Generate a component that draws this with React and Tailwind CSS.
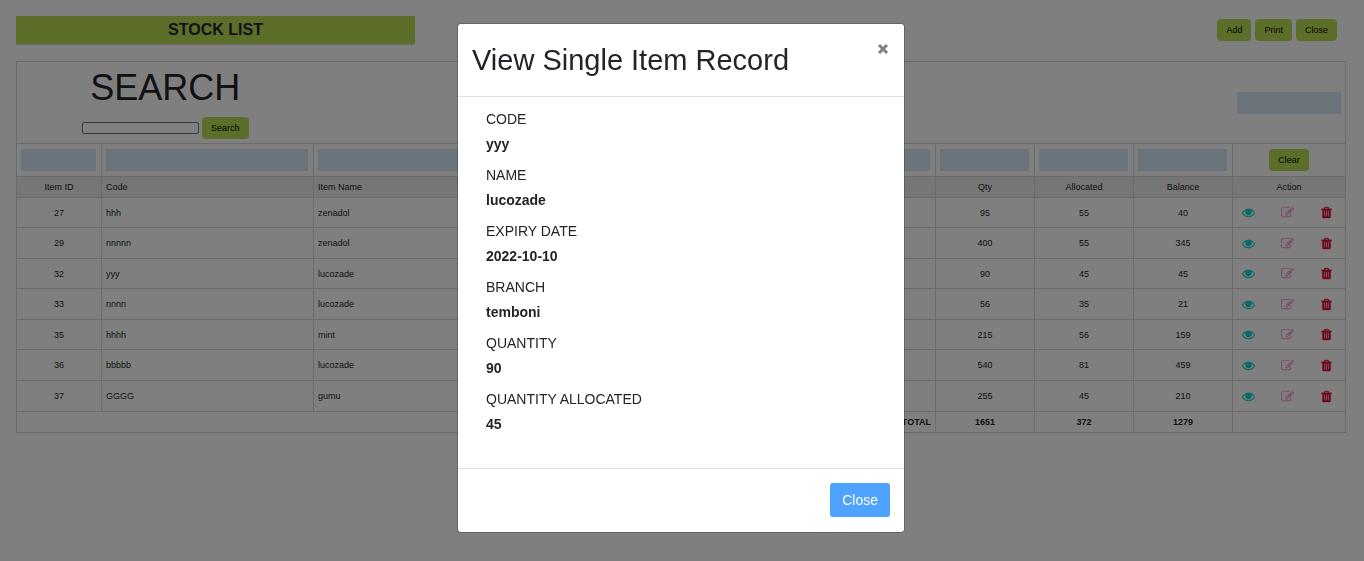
import React from "react";

const ITEMS = [
  { id: 27, code: "hhh", name: "zenadol", qty: 95, allocated: 55, balance: 40 },
  { id: 29, code: "nnnnn", name: "zenadol", qty: 400, allocated: 55, balance: 345 },
  { id: 32, code: "yyy", name: "lucozade", qty: 90, allocated: 45, balance: 45 },
  { id: 33, code: "nnnn", name: "lucozade", qty: 56, allocated: 35, balance: 21 },
  { id: 35, code: "hhhh", name: "mint", qty: 215, allocated: 56, balance: 159 },
  { id: 36, code: "bbbbb", name: "lucozade", qty: 540, allocated: 81, balance: 459 },
  { id: 37, code: "GGGG", name: "gumu", qty: 255, allocated: 45, balance: 210 },
];

const DETAILS = [
  ["CODE", "yyy"],
  ["NAME", "lucozade"],
  ["EXPIRY DATE", "2022-10-10"],
  ["BRANCH", "temboni"],
  ["QUANTITY", "90"],
  ["QUANTITY ALLOCATED", "45"],
];

const EYE =
  "M1664 960q-152-236-381-353 61 104 61 225 0 185-131.5 316.5t-316.5 131.5-316.5-131.5-131.5-316.5q0-121 61-225-229 117-381 353 133 205 333.5 326.5t434.5 121.5 434.5-121.5 333.5-326.5zm-720-384q0-20-14-34t-34-14q-125 0-214.5 89.5t-89.5 214.5q0 20 14 34t34 14 34-14 14-34q0-86 61-147t147-61q20 0 34-14t14-34zm848 384q0 34-20 69-140 230-376.5 368.5t-499.5 138.5-499.5-139-376.5-368q-20-35-20-69t20-69q140-229 376.5-368t499.5-139 499.5 139 376.5 368q20 35 20 69z";
const PUPIL = "M596 850a300 300 0 1 0 600 0a300 300 0 1 0 -600 0z";
const EDIT =
  "M888 1184l116-116-152-152-116 116v56h96v96h56zm440-720q-16-16-33 1l-350 350q-17 17-1 33t33-1l350-350q17-17 1-33zm80 594v190q0 119-84.5 203.5t-203.5 84.5h-832q-119 0-203.5-84.5t-84.5-203.5v-832q0-119 84.5-203.5t203.5-84.5h832q63 0 117 25 15 7 18 23 3 17-9 29l-49 49q-14 14-32 8-23-6-45-6h-832q-66 0-113 47t-47 113v832q0 66 47 113t113 47h832q66 0 113-47t47-113v-126q0-13 9-22l64-64q15-15 35-7t20 29zm-96-738l288 288-672 672h-288v-288zm444 132l-92 92-288-288 92-92q28-28 68-28t68 28l152 152q28 28 28 68t-28 68z";
const TRASH =
  "M704 1376v-704q0-14-9-23t-23-9h-64q-14 0-23 9t-9 23v704q0 14 9 23t23 9h64q14 0 23-9t9-23zm256 0v-704q0-14-9-23t-23-9h-64q-14 0-23 9t-9 23v704q0 14 9 23t23 9h64q14 0 23-9t9-23zm256 0v-704q0-14-9-23t-23-9h-64q-14 0-23 9t-9 23v704q0 14 9 23t23 9h64q14 0 23-9t9-23zm-544-992h448l-48-117q-7-9-17-11h-317q-10 2-17 11zm928 32v64q0 14-9 23t-23 9h-96v948q0 83-47 143.5t-113 60.5h-832q-66 0-113-58.5t-47-141.5v-952h-96q-14 0-23-9t-9-23v-64q0-14 9-23t23-9h309l70-167q15-37 54-63t79-26h320q40 0 79 26t54 63l70 167h309q14 0 23 9t9 23z";

function IconButton({ label, paths, weight, tone }) {
  return (
    <button type="button" aria-label={label} className={`block ${tone}`}>
      <svg
        viewBox="0 0 1792 1792"
        fill="currentColor"
        stroke="currentColor"
        strokeWidth={weight}
        className="block size-[13px] overflow-visible"
        aria-hidden="true"
      >
        {paths.map((d) => (
          <path key={d} d={d} />
        ))}
      </svg>
    </button>
  );
}

function GreenButton({ children }) {
  return (
    <button type="button" className="h-[22px] rounded-[4px] bg-[#badd57] px-[9px] text-[9px] leading-3 text-black">
      {children}
    </button>
  );
}

function FilterInput({ label }) {
  return <input type="text" aria-label={label} className="block h-[22px] w-full bg-[#d7e7f7] px-1 text-[9px]" />;
}

const cell = "border border-[#d6d6d6] px-1";
const centered = `${cell} text-center`;

function StockTable() {
  return (
    <table className="w-full table-fixed border-collapse text-[9px] leading-3">
      <colgroup>
        <col className="w-[85px]" />
        <col className="w-[212px]" />
        <col className="w-[212px]" />
        <col />
        <col className="w-[99px]" />
        <col className="w-[99px]" />
        <col className="w-[99px]" />
        <col className="w-[113px]" />
      </colgroup>
      <thead>
        <tr className="h-[82px]">
          <td colSpan={2} className="border border-r-0 border-[#d6d6d6] px-1 text-center">
            <h1 className="mb-2 text-[36px] leading-[43px]">SEARCH</h1>
            <div className="flex items-center justify-center gap-[3px]">
              <input
                type="text"
                aria-label="Search items"
                className="h-3 w-[117px] rounded-[2px] border border-[#767676] bg-white px-0.5 text-[9px]"
              />
              <GreenButton>Search</GreenButton>
            </div>
          </td>
          <td colSpan={5} className="border-y border-[#d6d6d6]" />
          <td className="border border-l-0 border-[#d6d6d6] px-1">
            <FilterInput label="Filter all columns" />
          </td>
        </tr>
        <tr className="h-[33px]">
          {["Item ID", "Code", "Item Name", "Details", "Qty", "Allocated", "Balance"].map((label) => (
            <td key={label} className="border border-[#d6d6d6] pr-[5px] pl-1">
              <FilterInput label={`Filter by ${label}`} />
            </td>
          ))}
          <td className={centered}>
            <GreenButton>Clear</GreenButton>
          </td>
        </tr>
        <tr className="h-[21px] bg-[#ececec]">
          <th className={`${centered} font-normal`}>Item ID</th>
          <th className={`${cell} text-left font-normal`}>Code</th>
          <th className={`${cell} text-left font-normal`}>Item Name</th>
          <th className={cell} />
          <th className={`${centered} font-normal`}>Qty</th>
          <th className={`${centered} font-normal`}>Allocated</th>
          <th className={`${centered} font-normal`}>Balance</th>
          <th className={`${centered} font-normal`}>Action</th>
        </tr>
      </thead>
      <tbody>
        {ITEMS.map((item) => (
          <tr key={item.id} className="h-[30px] last:h-[31px] even:h-[31px]">
            <td className={centered}>{item.id}</td>
            <td className={cell}>{item.code}</td>
            <td className={cell}>{item.name}</td>
            <td className={cell} />
            <td className={centered}>{item.qty}</td>
            <td className={centered}>{item.allocated}</td>
            <td className={centered}>{item.balance}</td>
            <td className={cell}>
              <div className="flex items-center justify-between pr-2 pl-[5px]">
                <IconButton label="View" paths={[EYE, PUPIL]} weight="20" tone="text-[#14d0ce]" />
                <IconButton label="Edit" paths={[EDIT]} weight="20" tone="text-[#f29fd4]" />
                <IconButton label="Delete" paths={[TRASH]} weight="50" tone="text-[#dc143c]" />
              </div>
            </td>
          </tr>
        ))}
      </tbody>
      <tfoot>
        <tr className="h-[21px] font-bold">
          <td colSpan={4} className={`${cell} text-right`}>TOTAL</td>
          <td className={centered}>1651</td>
          <td className={centered}>372</td>
          <td className={centered}>1279</td>
          <td className={cell} />
        </tr>
      </tfoot>
    </table>
  );
}

function RecordDialog() {
  return (
    <div className="fixed inset-0 flex items-start justify-center bg-black/50 pt-[23px] pr-0.5">
      <div
        role="dialog"
        aria-modal="true"
        aria-labelledby="record-title"
        className="w-full max-w-[448px] rounded-[4px] border border-black/20 bg-white bg-clip-padding"
      >
        <div className="flex items-start justify-between border-b border-[#dee2e6] px-[14px] pt-[15px] pb-[14px]">
          <h2 id="record-title" className="text-[29px] leading-[43px]">View Single Item Record</h2>
          <button type="button" aria-label="Dismiss" className="py-1 pr-px text-[#808080]">
            <svg viewBox="0 0 12 12" fill="none" stroke="currentColor" strokeWidth="3" className="block size-3" aria-hidden="true">
              <path d="M2 2 L10 10 M10 2 L2 10" />
            </svg>
          </button>
        </div>
        <dl className="px-7 pt-3 pb-[23px] text-sm">
          {DETAILS.map(([label, value]) => (
            <div key={label} className="h-14">
              <dt className="leading-[21px]">{label}</dt>
              <dd className="pt-1 font-bold leading-[21px]">{value}</dd>
            </div>
          ))}
        </dl>
        <div className="flex justify-end border-t border-[#dee2e6] px-[14px] pt-[14px] pb-[15px]">
          <button type="button" className="h-[34px] rounded-[3px] bg-[#4da3ff] px-3 text-sm text-white">
            Close
          </button>
        </div>
      </div>
    </div>
  );
}

export default function App() {
  return (
    <div className="min-h-screen bg-white font-['Liberation_Sans',Arial,sans-serif] text-[#212529]">
      <main className="pt-4 pr-[18px] pl-4">
        <div className="mb-4 flex items-start justify-between">
          <h2 className="w-[30%] border-b border-[#d6d6d6] bg-[#badd57] text-center text-base font-bold leading-7">
            STOCK LIST
          </h2>
          <div className="flex gap-1 pt-[3px] pr-[9px]">
            <GreenButton>Add</GreenButton>
            <GreenButton>Print</GreenButton>
            <GreenButton>Close</GreenButton>
          </div>
        </div>
        <StockTable />
      </main>
      <RecordDialog />
    </div>
  );
}
